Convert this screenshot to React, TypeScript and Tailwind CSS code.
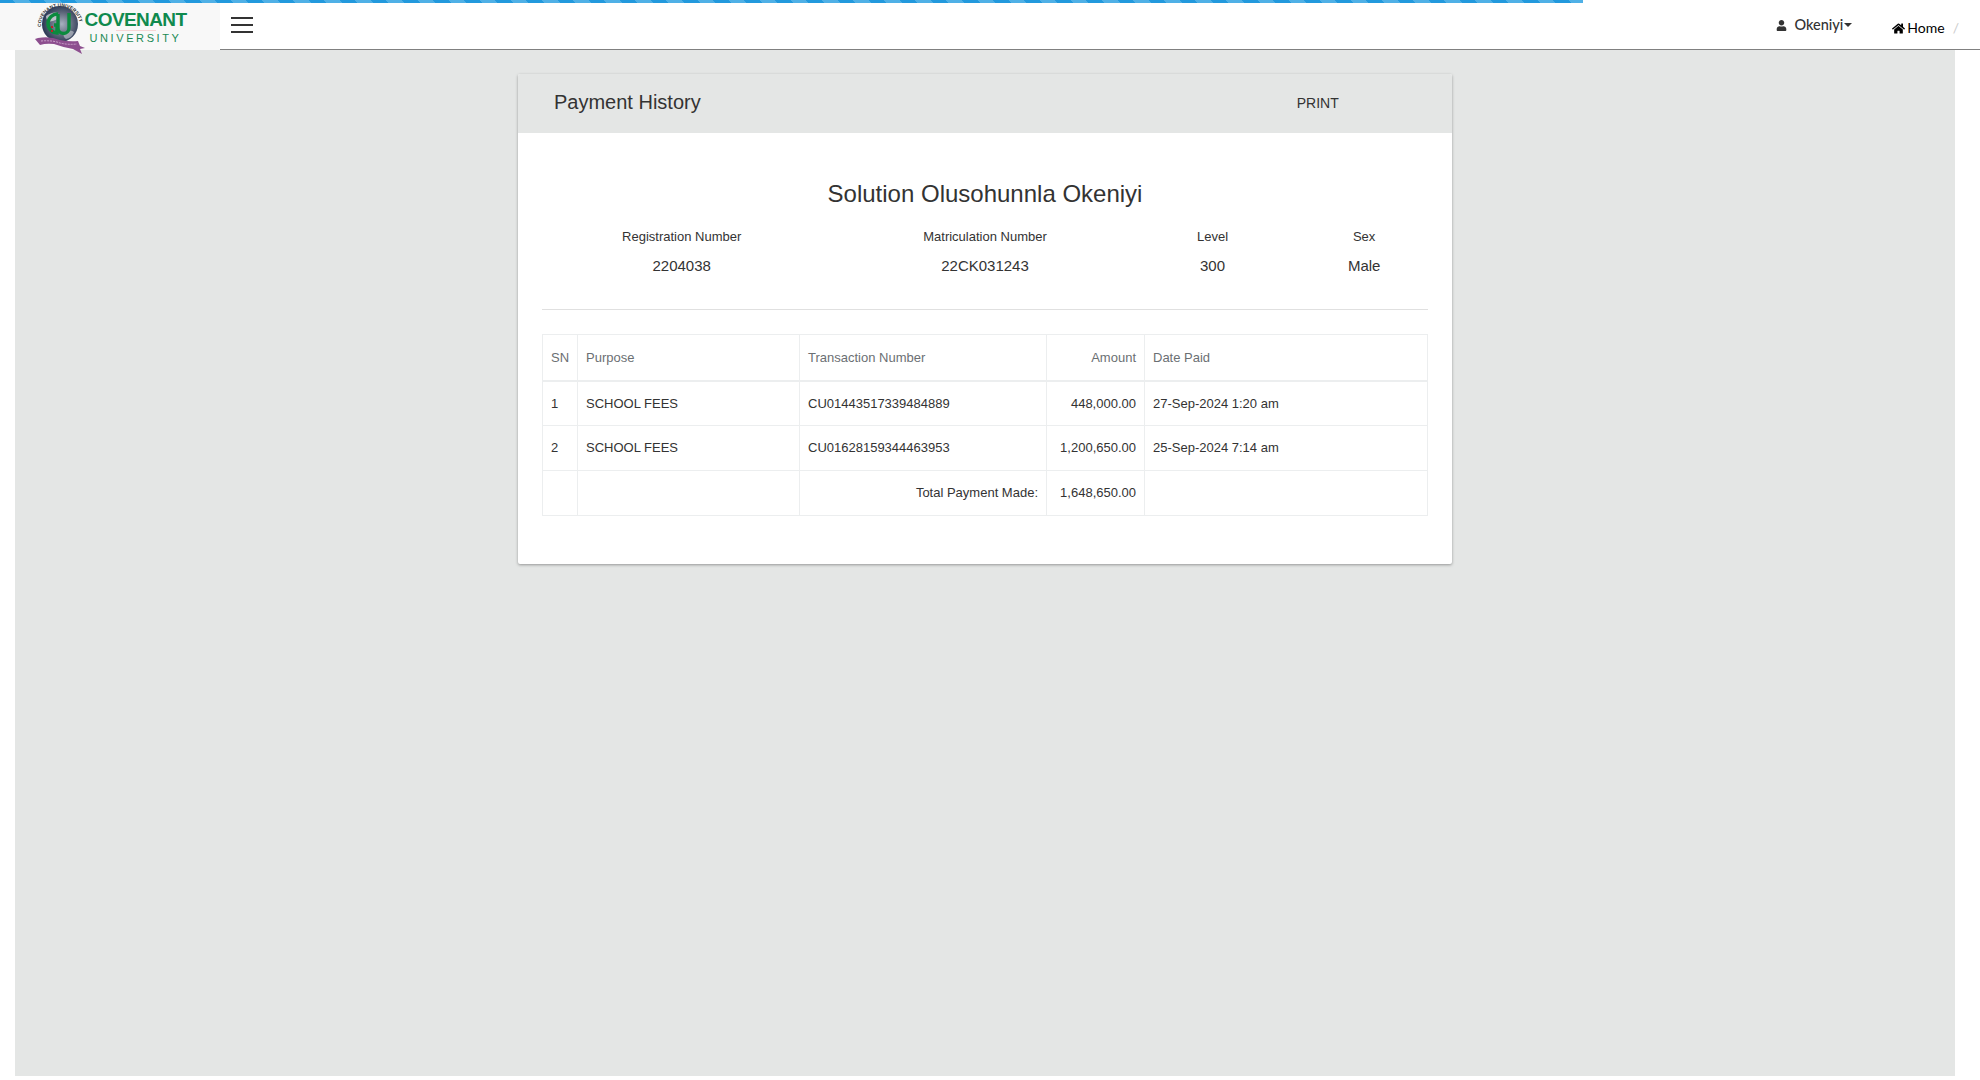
import { FaUser, FaHome } from "react-icons/fa";

const info = [
  ["Registration Number", "2204038", "col-span-2"],
  ["Matriculation Number", "22CK031243", "col-span-2"],
  ["Level", "300", "col-span-1"],
  ["Sex", "Male", "col-span-1"],
];

function Logo() {
  return (
    <svg width="76" height="56" viewBox="0 0 76 56" className="shrink-0 overflow-visible">
      <defs>
        <radialGradient id="globe" cx="55%" cy="50%" r="60%">
          <stop offset="0%" stopColor="#a7b0bf" />
          <stop offset="55%" stopColor="#5b6478" />
          <stop offset="100%" stopColor="#1c2a4a" />
        </radialGradient>
        <path id="ring" d="M 21 27 A 19.5 19.5 0 0 1 59.3 21" fill="none" />
      </defs>
      <circle cx="40" cy="24" r="18" fill="url(#globe)" />
      <path d="M26 16 q7 -5 12 -3 q2 6 -5 8 q-7 2 -7 -5z" fill="#d8dce2" opacity="0.75" />
      <path d="M44 32 q7 -3 10 0 q-2 6 -8 7 q-4 -3 -2 -7z" fill="#c9ced6" opacity="0.6" />
      <text fontFamily="'Liberation Sans', sans-serif" fontSize="4.8" fontWeight="700" fill="#333">
        <textPath href="#ring" textLength="58">COVENANT UNIVERSITY</textPath>
      </text>
      <path d="M38 14 a7.5 7.5 0 1 0 -1 19 l0 -8 l-3 0" fill="none" stroke="#0b8a3e" strokeWidth="3.4" />
      <path d="M38 14 l0 14 a5.5 5.5 0 0 0 11 0 l0 -15" fill="none" stroke="#0b8a3e" strokeWidth="3.4" />
      <rect x="31" y="26" width="2" height="2" fill="#c02026" />
      <rect x="31" y="30" width="2" height="2" fill="#c02026" />
      <path d="M15 39 L18 38 Q30 36 40 40 Q50 42 58 41 L60 46 L65 48 L60 49 L62 54 L53 49 Q42 47 34 44 Q26 43 20 45 Z" fill="#8d4f8f" />
      <path d="M21 41 Q32 40 40 43 Q48 45 57 44" fill="none" stroke="#d9b8d9" strokeWidth="0.8" strokeDasharray="2 1" />
    </svg>
  );
}

const th = "border border-[#eceeef] border-b-2 px-2 align-middle font-normal text-[13px] text-[#6b6f73]";
const td = "border border-[#eceeef] px-2 align-middle font-normal text-[13px] text-[#333]";

export default function App() {
  return (
    <div className="relative flex h-[1080px] flex-col overflow-hidden bg-white font-['Liberation_Sans',Arial,sans-serif] text-[#333]">
      <div className="absolute left-0 top-0 z-10 h-[3px] w-[1583px] bg-[repeating-linear-gradient(45deg,#2299dd_0,#2299dd_11px,#4fb0e6_11px,#4fb0e6_22px)]" />
      <header className="flex h-[50px] shrink-0 items-stretch border-b border-[#808080] bg-white">
        <div className="relative mt-[3px] mb-[-1px] flex w-[220px] shrink-0 bg-[#f8f8f8] pl-[20px]">
          <div className="mt-[-3px]"><Logo /></div>
          <div className="ml-[-11px] flex w-[101px] flex-col items-center pt-[7px]">
            <span className="whitespace-nowrap text-[19px] font-bold leading-[20px] tracking-[-0.6px] text-[#0f8a4e]">COVENANT</span>
            <span className="h-px w-[40px] bg-[#f6d5d5]" />
            <span className="mt-[1px] whitespace-nowrap text-[11px] leading-[12px] tracking-[2.6px] text-[#1a8a55]">UNIVERSITY</span>
          </div>
        </div>
        <div className="ml-[11px] flex w-[22px] flex-col gap-[5px] pt-[17px]">
          <span className="h-[2px] w-[22px] bg-[#333]" />
          <span className="h-[2px] w-[22px] bg-[#333]" />
          <span className="h-[2px] w-[22px] bg-[#333]" />
        </div>
        <div className="ml-auto flex items-start font-['Lato',sans-serif]">
          <div className="flex items-center pt-[15px] text-[14.5px] leading-[20px] text-[#333]">
            <FaUser className="h-[11px] w-[11px]" />
            <span className="ml-[7px] font-medium">Okeniyi</span>
            <span className="ml-[1px] h-0 w-0 border-x-[4px] border-t-[4px] border-x-transparent border-t-[#333]" />
          </div>
          <div className="ml-[40px] flex items-center pt-[18px] text-[14px] leading-[20px] text-black">
            <FaHome className="h-[13px] w-[13px]" />
            <span className="ml-[2px]">Home</span>
            <span className="ml-[8px] mr-[21px] text-[#ccc]">/</span>
          </div>
        </div>
      </header>

      <main className="ml-[15px] mr-[25px] h-[1026px] shrink-0 bg-[#e4e6e5] pt-[24px]">
        <section className="mx-auto w-[934px] rounded-[2px] bg-white shadow-[0_1px_3px_rgba(0,0,0,0.35)]">
          <div className="flex h-[59px] items-center rounded-t-[2px] bg-[#e4e6e5] pl-[36px]">
            <h2 className="mb-[3px] text-[20px] font-normal leading-[24px] text-[#333]">Payment History</h2>
            <span className="ml-[596px] text-[14px] text-[#333]">PRINT</span>
          </div>
          <div className="px-[12px] pb-[48px] pt-[47px]">
            <h3 className="text-center text-[24px] font-normal leading-[28px] text-[#333]">Solution Olusohunnla Okeniyi</h3>
            <div className="mt-[20px] grid grid-cols-6">
              {info.map(([label, value, span]) => (
                <div key={label} className={`${span} text-center`}>
                  <div className="text-[13px] leading-[18px] text-[#333]">{label}</div>
                  <div className="mt-[10px] text-[15px] leading-[20px] text-[#333]">{value}</div>
                </div>
              ))}
            </div>
            <div className="mx-[12px] mt-[33px] border-t border-[#e0e0e0]" />
            <div className="mx-[12px] mt-[24px]">
              <table className="w-[885px] table-fixed border-collapse">
                <colgroup>
                  <col className="w-[35px]" />
                  <col className="w-[222px]" />
                  <col className="w-[247px]" />
                  <col className="w-[98px]" />
                  <col className="w-[283px]" />
                </colgroup>
                <thead>
                  <tr className="h-[46px]">
                    <th className={`${th} text-left`}>SN</th>
                    <th className={`${th} text-left`}>Purpose</th>
                    <th className={`${th} text-left`}>Transaction Number</th>
                    <th className={`${th} text-right`}>Amount</th>
                    <th className={`${th} text-left`}>Date Paid</th>
                  </tr>
                </thead>
                <tbody>
                  <tr className="h-[45px]">
                    <td className={td}>1</td>
                    <td className={td}>SCHOOL FEES</td>
                    <td className={td}>CU01443517339484889</td>
                    <td className={`${td} text-right`}>448,000.00</td>
                    <td className={td}>27-Sep-2024 1:20 am</td>
                  </tr>
                  <tr className="h-[45px]">
                    <td className={td}>2</td>
                    <td className={td}>SCHOOL FEES</td>
                    <td className={td}>CU01628159344463953</td>
                    <td className={`${td} text-right`}>1,200,650.00</td>
                    <td className={td}>25-Sep-2024 7:14 am</td>
                  </tr>
                  <tr className="h-[45px]">
                    <td className={td}></td>
                    <td className={td}></td>
                    <td className={`${td} text-right`}>Total Payment Made:</td>
                    <td className={`${td} text-right`}>1,648,650.00</td>
                    <td className={td}></td>
                  </tr>
                </tbody>
              </table>
            </div>
          </div>
        </section>
      </main>
    </div>
  );
}
